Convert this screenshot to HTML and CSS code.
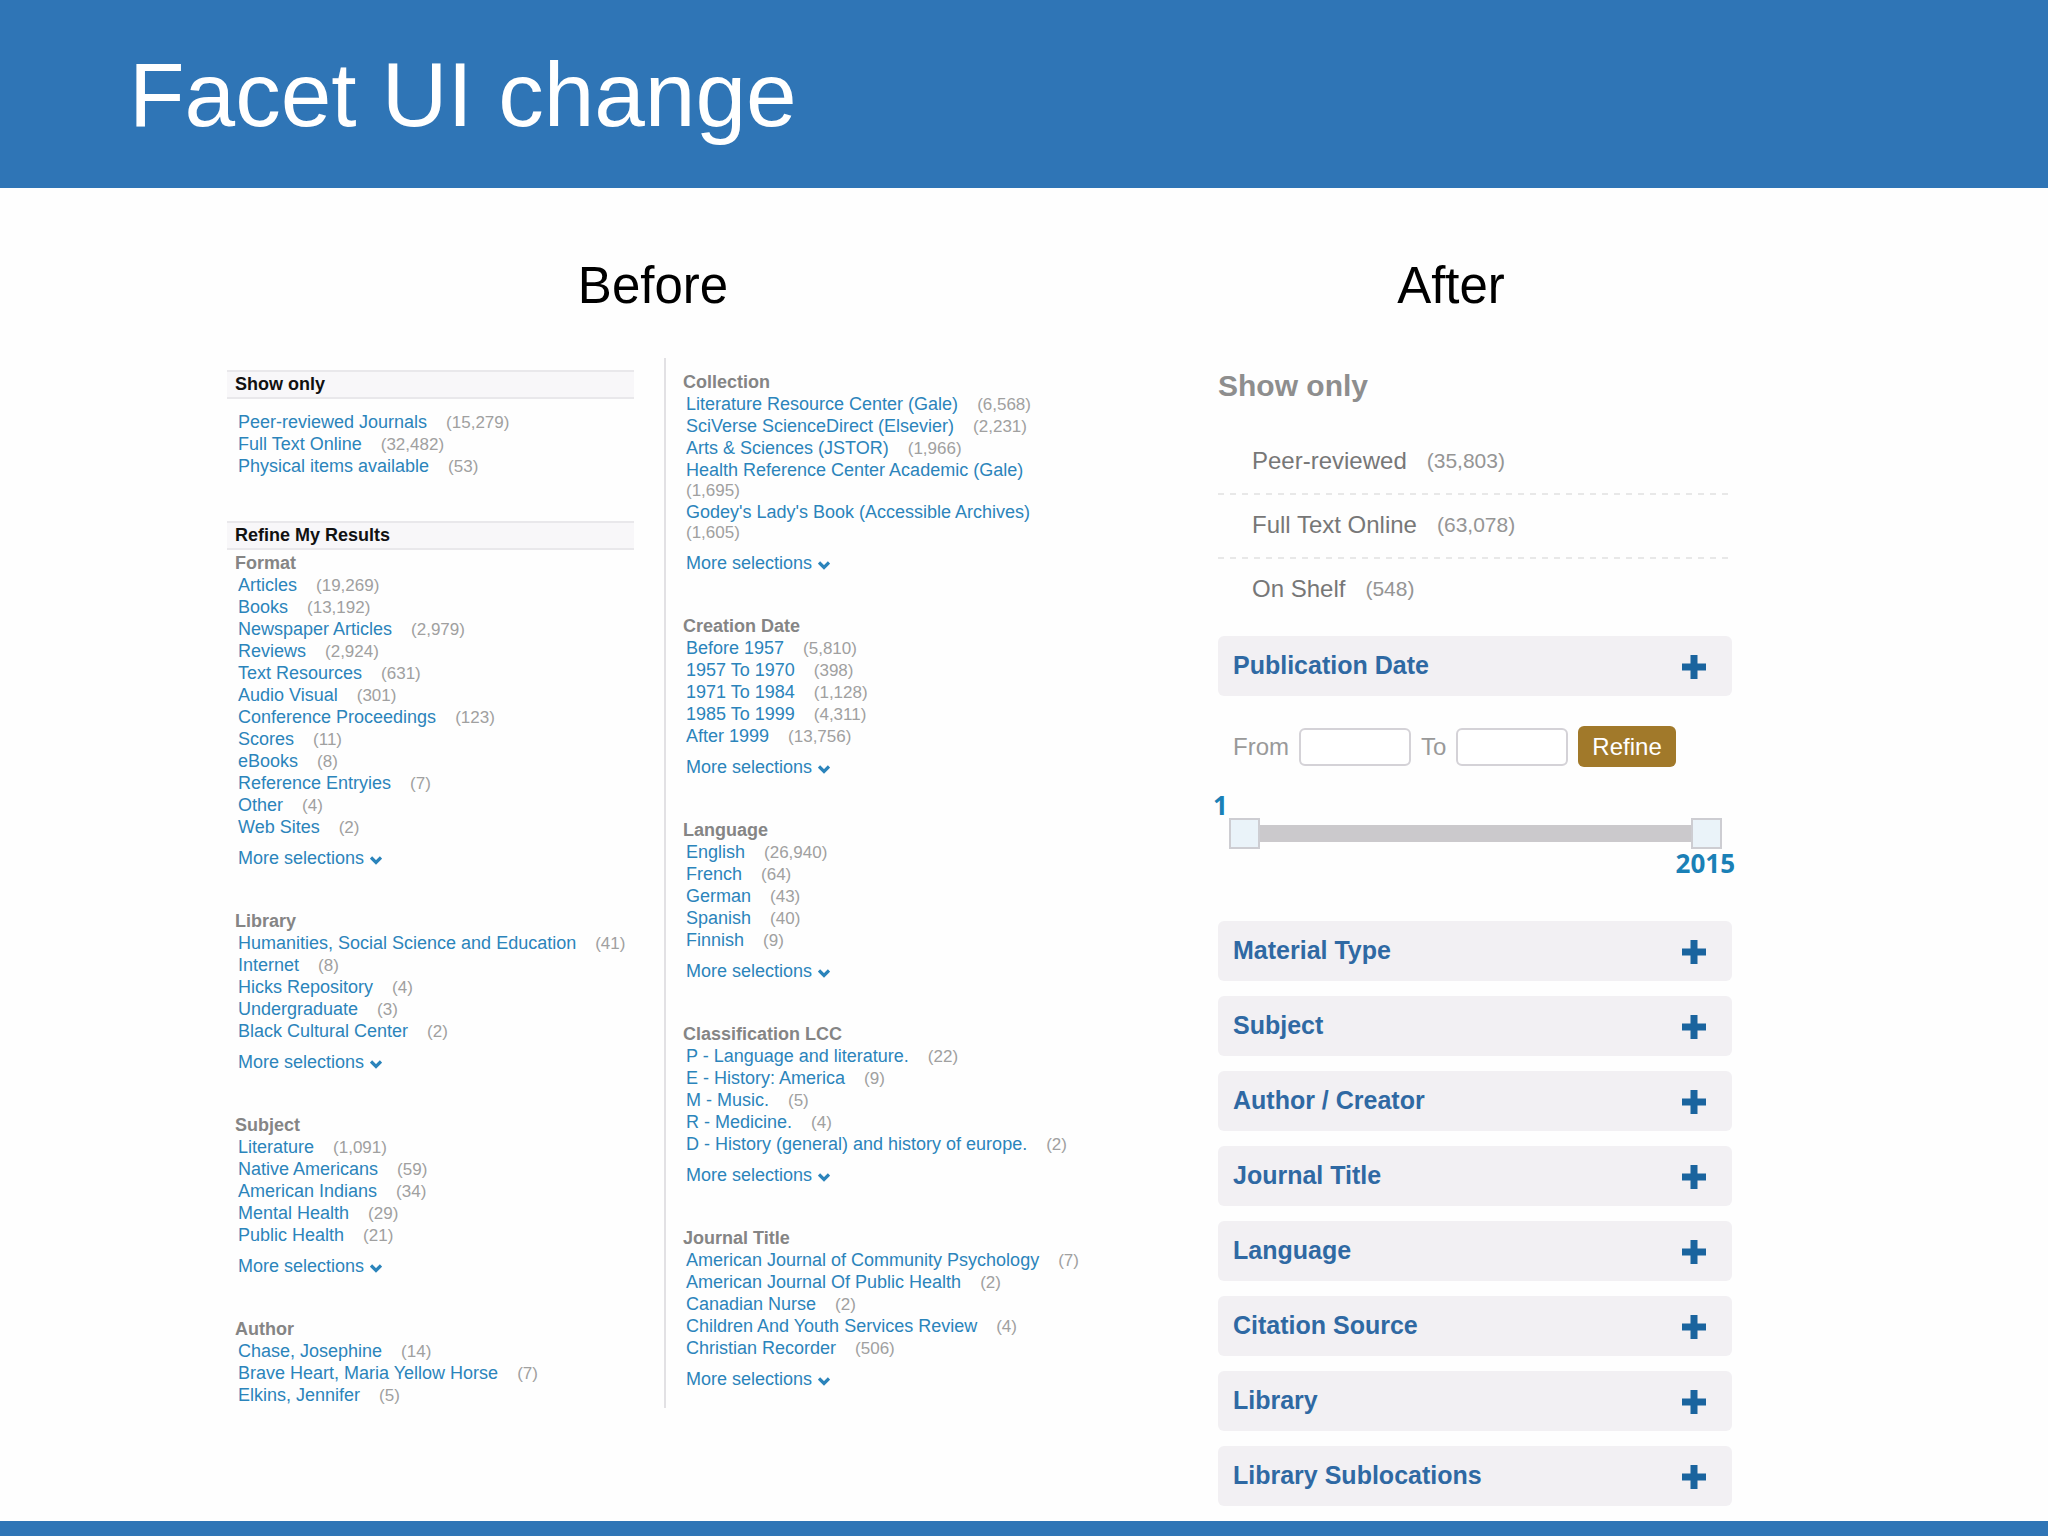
FILE: index.html
```html
<!DOCTYPE html>
<html lang="en">
<head>
    <meta charset="UTF-8">
    <meta name="viewport" content="width=device-width, initial-scale=1.0">
    <title>Facet UI change</title>
    <link rel="stylesheet" href="styles.css">
</head>
<body>
    <svg class="sprite" aria-hidden="true">
        <symbol id="chevron" viewBox="0 0 12 9">
            <path d="M1 1.5L6 6.5L11 1.5" fill="none" stroke="currentColor" stroke-width="3.2"/>
        </symbol>
        <symbol id="plus" viewBox="0 0 26 26">
            <path d="M9.5 1h7v8.5H25v7h-8.5V25h-7v-8.5H1v-7h8.5z" fill="currentColor"/>
        </symbol>
    </svg>

    <header class="title-bar">
        <h1>Facet UI change</h1>
    </header>

    <main class="slide">
        <section class="before">
            <h2 class="caption">Before</h2>
            <div class="columns">
                <div class="column column-left">
                    <h3 class="band">Show only</h3>
                    <ul class="facets show-only">
                        <li><a href="#">Peer-reviewed Journals</a> <span class="count">(15,279)</span></li>
                        <li><a href="#">Full Text Online</a> <span class="count">(32,482)</span></li>
                        <li><a href="#">Physical items available</a> <span class="count">(53)</span></li>
                    </ul>

                    <h3 class="band">Refine My Results</h3>
                    <div class="groups">
                        <div class="group">
                            <h4>Format</h4>
                            <ul class="facets">
                                <li><a href="#">Articles</a> <span class="count">(19,269)</span></li>
                                <li><a href="#">Books</a> <span class="count">(13,192)</span></li>
                                <li><a href="#">Newspaper Articles</a> <span class="count">(2,979)</span></li>
                                <li><a href="#">Reviews</a> <span class="count">(2,924)</span></li>
                                <li><a href="#">Text Resources</a> <span class="count">(631)</span></li>
                                <li><a href="#">Audio Visual</a> <span class="count">(301)</span></li>
                                <li><a href="#">Conference Proceedings</a> <span class="count">(123)</span></li>
                                <li><a href="#">Scores</a> <span class="count">(11)</span></li>
                                <li><a href="#">eBooks</a> <span class="count">(8)</span></li>
                                <li><a href="#">Reference Entryies</a> <span class="count">(7)</span></li>
                                <li><a href="#">Other</a> <span class="count">(4)</span></li>
                                <li><a href="#">Web Sites</a> <span class="count">(2)</span></li>
                            </ul>
                            <a class="more" href="#">More selections <svg><use href="#chevron"/></svg></a>
                        </div>
                        <div class="group">
                            <h4>Library</h4>
                            <ul class="facets">
                                <li><a href="#">Humanities, Social Science and Education</a> <span class="count">(41)</span></li>
                                <li><a href="#">Internet</a> <span class="count">(8)</span></li>
                                <li><a href="#">Hicks Repository</a> <span class="count">(4)</span></li>
                                <li><a href="#">Undergraduate</a> <span class="count">(3)</span></li>
                                <li><a href="#">Black Cultural Center</a> <span class="count">(2)</span></li>
                            </ul>
                            <a class="more" href="#">More selections <svg><use href="#chevron"/></svg></a>
                        </div>
                        <div class="group">
                            <h4>Subject</h4>
                            <ul class="facets">
                                <li><a href="#">Literature</a> <span class="count">(1,091)</span></li>
                                <li><a href="#">Native Americans</a> <span class="count">(59)</span></li>
                                <li><a href="#">American Indians</a> <span class="count">(34)</span></li>
                                <li><a href="#">Mental Health</a> <span class="count">(29)</span></li>
                                <li><a href="#">Public Health</a> <span class="count">(21)</span></li>
                            </ul>
                            <a class="more" href="#">More selections <svg><use href="#chevron"/></svg></a>
                        </div>
                        <div class="group">
                            <h4>Author</h4>
                            <ul class="facets">
                                <li><a href="#">Chase, Josephine</a> <span class="count">(14)</span></li>
                                <li><a href="#">Brave Heart, Maria Yellow Horse</a> <span class="count">(7)</span></li>
                                <li><a href="#">Elkins, Jennifer</a> <span class="count">(5)</span></li>
                            </ul>
                        </div>
                    </div>
                </div>

                <div class="column column-right">
                    <div class="groups">
                        <div class="group">
                            <h4>Collection</h4>
                            <ul class="facets">
                                <li><a href="#">Literature Resource Center (Gale)</a> <span class="count">(6,568)</span></li>
                                <li><a href="#">SciVerse ScienceDirect (Elsevier)</a> <span class="count">(2,231)</span></li>
                                <li><a href="#">Arts &amp; Sciences (JSTOR)</a> <span class="count">(1,966)</span></li>
                                <li><a href="#">Health Reference Center Academic (Gale)</a> <span class="count">(1,695)</span></li>
                                <li><a href="#">Godey's Lady's Book (Accessible Archives)</a> <span class="count">(1,605)</span></li>
                            </ul>
                            <a class="more" href="#">More selections <svg><use href="#chevron"/></svg></a>
                        </div>
                        <div class="group">
                            <h4>Creation Date</h4>
                            <ul class="facets">
                                <li><a href="#">Before 1957</a> <span class="count">(5,810)</span></li>
                                <li><a href="#">1957 To 1970</a> <span class="count">(398)</span></li>
                                <li><a href="#">1971 To 1984</a> <span class="count">(1,128)</span></li>
                                <li><a href="#">1985 To 1999</a> <span class="count">(4,311)</span></li>
                                <li><a href="#">After 1999</a> <span class="count">(13,756)</span></li>
                            </ul>
                            <a class="more" href="#">More selections <svg><use href="#chevron"/></svg></a>
                        </div>
                        <div class="group">
                            <h4>Language</h4>
                            <ul class="facets">
                                <li><a href="#">English</a> <span class="count">(26,940)</span></li>
                                <li><a href="#">French</a> <span class="count">(64)</span></li>
                                <li><a href="#">German</a> <span class="count">(43)</span></li>
                                <li><a href="#">Spanish</a> <span class="count">(40)</span></li>
                                <li><a href="#">Finnish</a> <span class="count">(9)</span></li>
                            </ul>
                            <a class="more" href="#">More selections <svg><use href="#chevron"/></svg></a>
                        </div>
                        <div class="group">
                            <h4>Classification LCC</h4>
                            <ul class="facets">
                                <li><a href="#">P - Language and literature.</a> <span class="count">(22)</span></li>
                                <li><a href="#">E - History: America</a> <span class="count">(9)</span></li>
                                <li><a href="#">M - Music.</a> <span class="count">(5)</span></li>
                                <li><a href="#">R - Medicine.</a> <span class="count">(4)</span></li>
                                <li><a href="#">D - History (general) and history of europe.</a> <span class="count">(2)</span></li>
                            </ul>
                            <a class="more" href="#">More selections <svg><use href="#chevron"/></svg></a>
                        </div>
                        <div class="group">
                            <h4>Journal Title</h4>
                            <ul class="facets">
                                <li><a href="#">American Journal of Community Psychology</a> <span class="count">(7)</span></li>
                                <li><a href="#">American Journal Of Public Health</a> <span class="count">(2)</span></li>
                                <li><a href="#">Canadian Nurse</a> <span class="count">(2)</span></li>
                                <li><a href="#">Children And Youth Services Review</a> <span class="count">(4)</span></li>
                                <li><a href="#">Christian Recorder</a> <span class="count">(506)</span></li>
                            </ul>
                            <a class="more" href="#">More selections <svg><use href="#chevron"/></svg></a>
                        </div>
                    </div>
                </div>
            </div>
        </section>

        <section class="after">
            <h2 class="caption">After</h2>
            <div class="panel">
                <h3>Show only</h3>
                <ul class="options">
                    <li><a href="#">Peer-reviewed</a> <span class="count">(35,803)</span></li>
                    <li><a href="#">Full Text Online</a> <span class="count">(63,078)</span></li>
                    <li><a href="#">On Shelf</a> <span class="count">(548)</span></li>
                </ul>

                <button class="facet-bar" type="button">Publication Date <svg><use href="#plus"/></svg></button>
                <form class="date-range">
                    <div class="date-fields">
                        <label for="from">From</label>
                        <input id="from" type="text">
                        <label for="to">To</label>
                        <input id="to" type="text">
                        <button class="refine" type="button">Refine</button>
                    </div>
                    <label class="year" for="minYear">1</label>
                    <div class="slider">
                        <input id="minYear" type="range" min="1" max="2015" value="1">
                        <input id="maxYear" type="range" min="1" max="2015" value="2015">
                    </div>
                    <label class="year year-max" for="maxYear">2015</label>
                </form>

                <div class="bars">
                    <button class="facet-bar" type="button">Material Type <svg><use href="#plus"/></svg></button>
                    <button class="facet-bar" type="button">Subject <svg><use href="#plus"/></svg></button>
                    <button class="facet-bar" type="button">Author / Creator <svg><use href="#plus"/></svg></button>
                    <button class="facet-bar" type="button">Journal Title <svg><use href="#plus"/></svg></button>
                    <button class="facet-bar" type="button">Language <svg><use href="#plus"/></svg></button>
                    <button class="facet-bar" type="button">Citation Source <svg><use href="#plus"/></svg></button>
                    <button class="facet-bar" type="button">Library <svg><use href="#plus"/></svg></button>
                    <button class="facet-bar" type="button">Library Sublocations <svg><use href="#plus"/></svg></button>
                </div>
            </div>
        </section>
    </main>

    <footer class="bottom-bar"></footer>
</body>
</html>
```

FILE: styles.css
```css
* {
    box-sizing: border-box;
}
body {
    margin: 0;
    min-height: 100vh;
    display: flex;
    flex-direction: column;
    font-family: "Liberation Sans", Arial, sans-serif;
    background-color: #fefefe;
}
h1, h2, h3, h4, ul {
    margin: 0;
    padding: 0;
}
ul {
    list-style: none;
}
a {
    color: #2b84bb;
    text-decoration: none;
}
.sprite {
    display: none;
}
.title-bar {
    padding: 43px 129px 41px;
    background-color: #2f75b6;
}
.title-bar h1 {
    font-size: 91px;
    line-height: 104px;
    font-weight: normal;
    color: white;
}
.bottom-bar {
    height: 15px;
    background-color: #2f75b6;
}
.slide {
    flex: 1;
    display: grid;
    grid-template-columns: 858fr 514fr;
    column-gap: 133px;
    align-items: start;
    padding: 69px 316px 14px 227px;
}
.caption {
    margin-bottom: 43px;
    padding-right: 6px;
    font-size: 51px;
    line-height: 58px;
    font-weight: normal;
    text-align: center;
    color: black;
}
.after .caption {
    padding-right: 48px;
}

/* old facet list */
.columns {
    display: grid;
    grid-template-columns: 437fr 421fr;
    font-size: 18px;
    line-height: 22px;
}
.column-left {
    padding: 12px 30px 2px 0;
}
.column-right {
    padding: 13px 0 0 17px;
    border-left: 2px solid #e2e1e4;
}
.band {
    padding: 1px 8px 2px;
    border-top: 2px solid #e9e8eb;
    border-bottom: 2px solid #e9e8eb;
    background-color: #f8f7f9;
    font-size: 18px;
    line-height: 22px;
    color: #111;
}
.groups {
    display: flex;
    flex-direction: column;
    gap: 41px;
}
.column-left .groups {
    padding: 2px 0 0 8px;
}
.group h4 {
    font-size: 18px;
    color: #858585;
}
.facets, .more {
    padding-left: 3px;
}
.show-only {
    padding: 12px 0 44px 11px;
}
.facets li {
    display: flex;
    flex-wrap: wrap;
    align-items: baseline;
    column-gap: 19px;
}
.facets .count {
    font-size: 17px;
    line-height: 20px;
    color: #a0a0a0;
}
.more {
    display: flex;
    align-items: center;
    gap: 6px;
    margin-top: 9px;
}
.more svg {
    width: 12px;
    height: 9px;
    margin-top: 4px;
}

/* new facet panel */
.panel {
    padding-top: 12px;
}
.panel h3 {
    margin-bottom: 29px;
    font-size: 30px;
    line-height: 32px;
    color: #8e8e8e;
}
.options {
    margin-bottom: 13px;
    font-size: 24px;
}
.options li {
    display: flex;
    align-items: center;
    gap: 20px;
    height: 64px;
    padding: 0 0 4px 34px;
}
.options li:not(:last-child) {
    background: repeating-linear-gradient(to right, #e8e8e8 0 6px, transparent 6px 12px) bottom / 100% 2px no-repeat;
}
.options a {
    color: #777;
}
.options .count {
    font-size: 21px;
    color: #959595;
}
.facet-bar {
    display: flex;
    align-items: center;
    justify-content: space-between;
    width: 100%;
    height: 60px;
    padding: 0 25px 2px 15px;
    border: none;
    border-radius: 6px;
    background-color: #f2f0f3;
    font-family: inherit;
    font-size: 25px;
    font-weight: bold;
    color: #2f69a3;
    cursor: pointer;
}
.facet-bar svg {
    width: 26px;
    height: 26px;
    margin-top: 4px;
    color: #1a649e;
}
.bars {
    display: flex;
    flex-direction: column;
    gap: 15px;
}
.date-range {
    padding: 30px 0 45px;
}
.date-fields {
    display: flex;
    align-items: center;
    gap: 10px;
    margin-bottom: 25px;
    padding-left: 15px;
    font-size: 24px;
    color: #999;
}
.date-fields input {
    width: 112px;
    height: 38px;
    border: 2px solid #d4d2d7;
    border-radius: 6px;
    background-color: white;
    font-size: 24px;
}
.refine {
    height: 41px;
    padding: 0 14px;
    border: none;
    border-radius: 6px;
    background-color: #a1792a;
    font-family: inherit;
    font-size: 24px;
    color: white;
    cursor: pointer;
}
.year {
    display: block;
    margin: 0 -3px 0 -5px;
    font-family: "Open Sans", sans-serif;
    font-size: 26px;
    line-height: 26px;
    font-weight: bold;
    color: #1a80b6;
}
.year-max {
    text-align: right;
}
.slider {
    display: grid;
    margin: 0 10px 1px 11px;
    background: linear-gradient(#cbc9cc, #cbc9cc) center / 100% 17px no-repeat;
}
/* both range inputs share one track */
.slider input {
    grid-area: 1 / 1;
    width: 100%;
    height: 31px;
    margin: 0;
    appearance: none;
    background: transparent;
    pointer-events: none;
}
.slider input::-webkit-slider-thumb {
    appearance: none;
    width: 31px;
    height: 31px;
    border: 2px solid #cdcdd2;
    background-color: #eaf3f9;
    pointer-events: auto;
}
```
